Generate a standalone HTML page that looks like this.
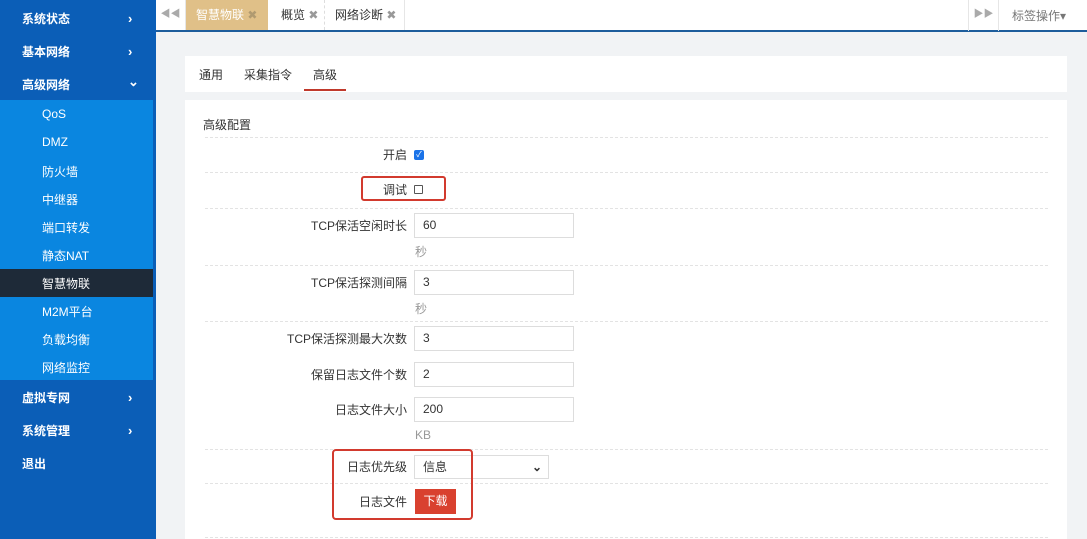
<!DOCTYPE html><html><head><meta charset="utf-8"><style>
*{margin:0;padding:0;box-sizing:border-box}
body{width:1087px;height:539px;overflow:hidden;font-family:"Liberation Sans","Noto Sans CJK SC",sans-serif;font-size:12px;color:#333;background:#f1f3f5;position:relative}
.side{position:absolute;left:0;top:0;width:156px;height:539px;background:#0b5eb7}
.m{position:absolute;left:22px;color:#fff;font-weight:bold;font-size:12px}
.ar{position:absolute;left:128px;color:#fff;font-size:13px;font-weight:bold}
.sub{position:absolute;left:0;top:100px;width:153px;height:280px;background:#0a86e0}
.s{position:absolute;left:42px;color:#fff;font-size:12px}
.act{position:absolute;left:0;top:269px;width:153px;height:28px;background:#1e2a38}
.abs{position:absolute}
.row{position:absolute;left:205px;width:843px;border-top:1px dashed #e3e3e3}
.lb{position:absolute;right:680px;text-align:right;white-space:nowrap}
.in{position:absolute;left:414px;width:160px;height:25px;border:1px solid #ddd;background:#fff;padding-left:8px;line-height:23px}
.hint{position:absolute;left:415px;color:#999}
</style></head><body>
<div class="side">
<div class="m" style="top:10px">系统状态</div><div class="ar" style="top:11px">›</div>
<div class="m" style="top:43px">基本网络</div><div class="ar" style="top:44px">›</div>
<div class="m" style="top:76px">高级网络</div><div class="ar" style="top:74px">⌄</div>
<div class="sub"></div><div class="act"></div>
<div class="s" style="top:107px">QoS</div>
<div class="s" style="top:135px">DMZ</div>
<div class="s" style="top:163px">防火墙</div>
<div class="s" style="top:191px">中继器</div>
<div class="s" style="top:219px">端口转发</div>
<div class="s" style="top:247px">静态NAT</div>
<div class="s" style="top:275px">智慧物联</div>
<div class="s" style="top:303px">M2M平台</div>
<div class="s" style="top:331px">负载均衡</div>
<div class="s" style="top:359px">网络监控</div>
<div class="m" style="top:389px">虚拟专网</div><div class="ar" style="top:390px">›</div>
<div class="m" style="top:422px">系统管理</div><div class="ar" style="top:423px">›</div>
<div class="m" style="top:455px">退出</div>
</div>
<div class="abs" style="left:156px;top:0;width:931px;height:32px;background:#fff;border-bottom:2px solid #1d5d9c"></div>
<div class="abs" style="left:156px;top:0;width:30px;height:30px;border-right:1px solid #e6e6e6;color:#aaa;text-align:center;line-height:30px;font-size:10px">◀◀</div>
<div class="abs" style="left:186px;top:0;width:82px;height:30px;background:#e0c088;color:#fff;line-height:30px;padding-left:10px">智慧物联 <span style="color:#b09a70">✖</span></div>
<div class="abs" style="left:268px;top:0;width:57px;height:30px;border-right:1px dashed #ddd;line-height:30px;padding-left:13px">概览 <span style="color:#999">✖</span></div>
<div class="abs" style="left:325px;top:0;width:80px;height:30px;border-right:1px solid #e6e6e6;line-height:30px;padding-left:10px">网络诊断 <span style="color:#999">✖</span></div>
<div class="abs" style="left:968px;top:0;width:31px;height:31px;border-left:1px solid #e6e6e6;border-right:1px solid #e6e6e6;color:#aaa;text-align:center;line-height:30px;font-size:10px">▶▶</div>
<div class="abs" style="left:1012px;top:0;line-height:32px;color:#777">标签操作▾</div>
<div class="abs" style="left:185px;top:56px;width:882px;height:36px;background:#fff"></div>
<div class="abs" style="left:199px;top:66px">通用</div>
<div class="abs" style="left:244px;top:66px">采集指令</div>
<div class="abs" style="left:313px;top:66px">高级</div>
<div class="abs" style="left:304px;top:89px;width:42px;height:2px;background:#c0392b"></div>
<div class="abs" style="left:185px;top:100px;width:882px;height:439px;background:#fff"></div>
<div class="abs" style="left:203px;top:116px">高级配置</div>
<div class="row" style="top:137px"></div>
<div class="lb" style="top:146px">开启</div>
<div class="abs" style="left:414px;top:150px;width:10px;height:10px;background:#1a73e8;border-radius:2px;color:#fff;font-size:8px;line-height:10px;text-align:center">✓</div>
<div class="row" style="top:172px"></div>
<div class="lb" style="top:181px">调试</div>
<div class="abs" style="left:414px;top:185px;width:9px;height:9px;border:1px solid #555;border-radius:1px"></div>
<div class="abs" style="left:361px;top:176px;width:85px;height:25px;border:2px solid #d23a2e;border-radius:3px"></div>
<div class="row" style="top:208px"></div>
<div class="lb" style="top:217px">TCP保活空闲时长</div><div class="in" style="top:213px">60</div><div class="hint" style="top:243px">秒</div>
<div class="row" style="top:265px"></div>
<div class="lb" style="top:274px">TCP保活探测间隔</div><div class="in" style="top:270px">3</div><div class="hint" style="top:300px">秒</div>
<div class="row" style="top:321px"></div>
<div class="lb" style="top:330px">TCP保活探测最大次数</div><div class="in" style="top:326px">3</div>
<div class="lb" style="top:366px">保留日志文件个数</div><div class="in" style="top:362px">2</div>
<div class="lb" style="top:401px">日志文件大小</div><div class="in" style="top:397px">200</div><div class="hint" style="top:428px">KB</div>
<div class="row" style="top:449px"></div>
<div class="lb" style="top:458px">日志优先级</div>
<div class="in" style="top:455px;width:135px;height:24px;line-height:22px">信息<span style="position:absolute;right:6px;font-weight:bold">⌄</span></div>
<div class="row" style="top:483px"></div>
<div class="lb" style="top:493px">日志文件</div>
<div class="abs" style="left:415px;top:489px;width:41px;height:25px;background:#d9412f;color:#fff;text-align:center;line-height:25px">下载</div>
<div class="abs" style="left:332px;top:449px;width:141px;height:71px;border:2px solid #d23a2e;border-radius:4px"></div>
<div class="row" style="top:537px"></div>
</body></html>
